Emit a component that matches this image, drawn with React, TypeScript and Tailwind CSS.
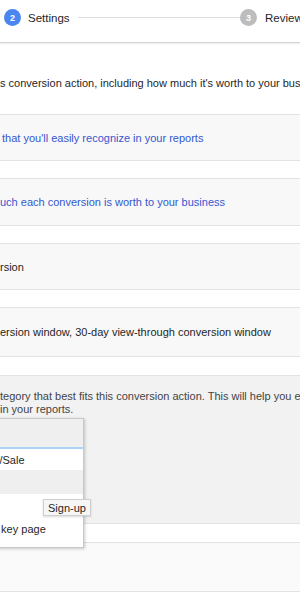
import React from 'react';

const font = { fontFamily: '"Liberation Sans", Arial, sans-serif' };

const StepCircle = ({ n, active }: { n: number; active: boolean }) => (
  <div
    className={`flex h-[17px] w-[17px] shrink-0 items-center justify-center rounded-full text-[9px] font-bold text-white ${
      active ? 'bg-[#4a86f1]' : 'bg-[#bdbdbd]'
    }`}
  >
    {n}
  </div>
);

const App = () => {
  return (
    <div
      className="relative h-[600px] w-[300px] overflow-hidden whitespace-nowrap bg-white text-[11px] leading-[14px] text-[#1f1f1f]"
      style={font}
    >
      {/* stepper */}
      <div className="flex h-[43px] items-center border-b border-[#d4d4d4] pl-[4px] pb-[7px] shadow-[0_1px_2px_rgba(0,0,0,0.08)]">
        <StepCircle n={2} active />
        <span className="ml-[7px] text-[11.5px]">Settings</span>
        <div className="ml-[8px] h-px flex-1 bg-[#dcdcdc]" />
        <StepCircle n={3} active={false} />
        <span className="ml-[8px] w-[35px] shrink-0 text-[11.5px]">Review</span>
      </div>

      {/* intro */}
      <div className="h-[71px] pt-[33px]">
        <p>s conversion action, including how much it's worth to your business</p>
      </div>

      <div className="flex h-[47px] items-center border-y border-[#e3e3e3] bg-[#f8f8f8] pl-[2px] text-[#3557cf]">
        that you'll easily recognize in your reports
      </div>

      <div className="mt-[17px] flex h-[48px] items-center border-y border-[#e3e3e3] bg-[#f8f8f8] text-[#3557cf]">
        uch each conversion is worth to your business
      </div>

      <div className="mt-[17px] flex h-[47px] items-center border-y border-[#e3e3e3] bg-[#f8f8f8]">
        rsion
      </div>

      <div className="mt-[17px] flex h-[50px] items-center border-y border-[#e3e3e3] bg-[#f8f8f8]">
        ersion window, 30-day view-through conversion window
      </div>

      {/* category section with open list */}
      <div className="relative mt-[18px] h-[149px] border-y border-[#e3e3e3] bg-[#f2f2f2] pt-[14px] text-[#444]">
        <p className="leading-[13px]">tegory that best fits this conversion action. This will help you easily</p>
        <p className="leading-[13px]">in your reports.</p>

        <div className="absolute left-[-58px] top-[42px] z-10 flex h-[130px] w-[142px] flex-col border border-[#c8c8c8] bg-white text-[#1f1f1f] shadow-[1px_1px_3px_rgba(0,0,0,0.2)]">
          <div className="h-[28px] bg-[#efefef]" />
          <div className="h-[2px] bg-[#acd3f7]" />
          <div className="flex h-[21px] items-center pl-[10px]">Purchase/Sale</div>
          <div className="flex h-[24px] items-center bg-[#efefef] pl-[10px]">Sign-up</div>
          <div className="flex h-[23px] items-center pl-[10px]">Lead</div>
          <div className="flex h-[24px] items-center pl-[10px]">View of a key page</div>
        </div>

        <div className="absolute left-[43px] top-[123px] z-20 flex h-[17px] w-[48px] items-center justify-center border border-[#cfcfcf] bg-[#f6f6f6] text-[11px] text-[#1f1f1f] shadow-[0_1px_2px_rgba(0,0,0,0.15)]">
          Sign-up
        </div>
      </div>

      <div className="mt-[18px] h-[50px] border-y border-[#e3e3e3] bg-[#fafafa]" />
    </div>
  );
};

export default App;
